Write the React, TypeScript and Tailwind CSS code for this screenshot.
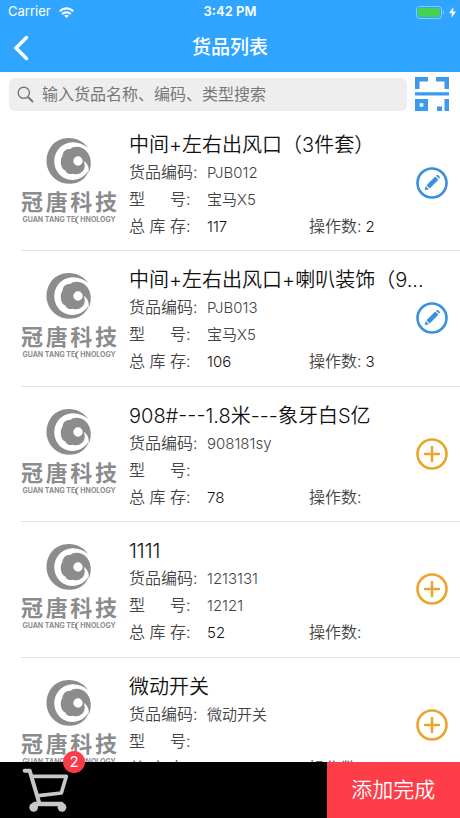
type Goods = {
  name: string;
  code: string;
  model?: string;
  stock: number;
  count?: number;
};

const goodsList: Goods[] = [
  { name: '中间+左右出风口（3件套）', code: 'PJB012', model: '宝马X5', stock: 117, count: 2 },
  { name: '中间+左右出风口+喇叭装饰（9...', code: 'PJB013', model: '宝马X5', stock: 106, count: 3 },
  { name: '908#---1.8米---象牙白S亿', code: '908181sy', stock: 78 },
  { name: '1111', code: '1213131', model: '12121', stock: 52 },
  { name: '微动开关', code: '微动开关', stock: 36 },
];

function StatusBar() {
  return (
    <div className="grid grid-cols-3 items-center h-6 px-2 text-[13px]">
      <div className="flex items-center gap-2">
        <span>Carrier</span>
        <svg width="15" height="11" viewBox="0 0 15 11" fill="none" stroke="white" strokeWidth="2.2">
          <path d="M.8 4.200C4.600.5 10.400.5 14.200 4.200" />
          <path d="M3.200 7c2.500-2.300 6.100-2.300 8.600 0" />
          <path d="M7.500 11 5.200 8.700c1.300-1.200 3.300-1.200 4.600 0z" fill="white" stroke="none" />
        </svg>
      </div>
      <span className="text-center font-semibold">3:42 PM</span>
      <div className="flex items-center justify-end">
        <svg width="29" height="13" viewBox="0 0 29 13">
          <rect x=".5" y=".5" width="25" height="12" rx="3" fill="none" stroke="#8ccbfc" />
          <rect x="2" y="2" width="22" height="9" rx="1.500" fill="#43d251" />
          <path d="M27 4.500c1.500.5 1.500 3.500 0 4z" fill="#8ccbfc" />
        </svg>
        <svg width="7" height="11" viewBox="0 0 7 11" className="ml-1 -mr-1">
          <path d="M4.500 0 0 6.200h3L2.200 11 7 4.600H4z" fill="white" />
        </svg>
      </div>
    </div>
  );
}

function Header() {
  return (
    <header className="shrink-0 bg-[#30a5ff] text-white">
      <StatusBar />
      <div className="grid grid-cols-[48px_1fr_48px] items-center h-12">
        <button type="button" aria-label="返回" className="flex items-center h-full pl-3">
          <svg width="18" height="26" viewBox="0 0 18 26" fill="none" stroke="white" strokeWidth="3.500">
            <path d="M14.500 2.500 4 13l10.500 10.500" strokeLinecap="round" strokeLinejoin="miter" />
          </svg>
        </button>
        <h1 className="text-center text-[19px] font-medium">货品列表</h1>
      </div>
    </header>
  );
}

function SearchBar() {
  return (
    <div className="flex shrink-0 items-center gap-2 h-11 pl-[9px] pr-[11px]">
      <label className="flex flex-1 items-center gap-2 h-[33px] px-2 rounded-md bg-[#eee]">
        <svg width="17" height="17" viewBox="0 0 17 17" fill="none" stroke="#76767a" strokeWidth="1.400">
          <circle cx="6.800" cy="6.800" r="5.600" />
          <path d="m11 11 5 5" strokeWidth="2" />
        </svg>
        <input
          type="search"
          aria-label="搜索货品"
          placeholder="输入货品名称、编码、类型搜索"
          className="flex-1 min-w-0 text-base outline-none placeholder:text-[#77777b]"
        />
      </label>
      <button type="button" aria-label="扫码">
        <svg width="34" height="34" viewBox="0 0 34 34" fill="#3b99f0">
          <path d="M0 0h13v4.500H4.500V12H0zM21 0h13v12h-4.500V4.500H21zM0 15.200h34v3.300H0z" />
          <path fillRule="evenodd" d="M0 22h13v12H0zM4.700 26.200v3.600h3.600v-3.600z" />
          <path d="M29.500 22H34v12h-4.500zM22 29.500h5V34h-5z" />
        </svg>
      </button>
    </div>
  );
}

function Logo() {
  return (
    <div className="flex flex-col items-center w-24 text-[#8c8c8c]">
      <svg width="46" height="46" viewBox="0 0 138 138" fill="currentColor">
        <path d="M126 30C103-5 48-12 17 23-12 60 0 117 48 134c36 11 71-5 81-38-19 32-57 39-84 18C18 91 18 48 46 25c24-19 57-15 80 5z" />
        <path
          fillRule="evenodd"
          d="M50 52C51 38 62 31 73 33C83 22 108 24 120 38C137 55 138 82 128 105C131 88 124 76 113 68C119 82 116 97 107 102C100 109 90 110 82 107C72 110 61 107 59 98C43 93 40 66 50 52zM96 55a14 14 0 1 0 0 28 14 14 0 0 0 0-28z"
        />
      </svg>
      <div className="flex justify-between self-stretch h-8 text-[22px] leading-9 font-bold">
        <span>冠</span>
        <span>唐</span>
        <span>科</span>
        <span>技</span>
      </div>
      <div className="flex items-center h-2 text-[7px] leading-2 font-bold whitespace-nowrap">
        <span>GUAN TANG TE</span>
        <svg width="5" height="10" viewBox="0 0 6 10" fill="currentColor">
          <path d="M6 0C-2 0-2 9 5 10 1 7 1 2 6 0z" />
        </svg>
        <span>HNOLOGY</span>
      </div>
    </div>
  );
}

function EditIcon() {
  return (
    <svg width="32" height="32" viewBox="0 0 32 32" fill="#3b90dd">
      <circle cx="16" cy="16" r="14.500" fill="none" stroke="#3b90dd" strokeWidth="2.600" />
      <path d="m8.700 23.300 1-4.200 3.200 3.200zM10.500 18.300l8.700-8.700 3.200 3.200-8.700 8.700zM20 8.800l1-.8c1-.7 3.500 1.800 2.800 2.800l-.8 1z" />
    </svg>
  );
}

function AddIcon() {
  return (
    <svg width="32" height="32" viewBox="0 0 32 32" fill="none" stroke="#eba52f" strokeWidth="2.600">
      <circle cx="16" cy="16" r="14.500" />
      <path d="M16 9v14M9 16h14" strokeLinecap="round" />
    </svg>
  );
}

function GoodsRow({ goods }: { goods: Goods }) {
  const added = goods.count !== undefined;

  return (
    <li className="flex odd:h-[135px] even:h-[136px] ml-[21px] border-b border-[#e2e2e2]">
      <div className="pt-[22px]">
        <Logo />
      </div>
      <div className="relative flex-1 min-w-0 pl-3 pt-[15px]">
        <h2 className="text-xl leading-7 font-[350] text-[#111] truncate pr-6">{goods.name}</h2>
        <dl className="grid grid-cols-[78px_102px_1fr] auto-rows-[27px] items-baseline leading-[27px] font-[350] text-[#444] whitespace-pre">
          <dt>货品编码:</dt>
          <dd className="col-span-2 text-[15px]">{goods.code}</dd>
          <dt>型{'\u3000  '}号:</dt>
          <dd className="col-span-2 text-[15px]">{goods.model}</dd>
          <dt>总 库 存:</dt>
          <dd className="text-[15px] text-[#111]">{goods.stock}</dd>
          <div className="flex items-baseline gap-1">
            <dt>操作数:</dt>
            <dd className="text-[15px] text-[#111]">{goods.count}</dd>
          </div>
        </dl>
        <button
          type="button"
          aria-label={added ? '编辑' : '添加'}
          className="absolute right-3 top-[51px]"
        >
          {added ? <EditIcon /> : <AddIcon />}
        </button>
      </div>
    </li>
  );
}

function Footer() {
  return (
    <footer className="flex shrink-0 justify-between h-14 bg-black">
      <button type="button" aria-label="购物车" className="relative w-24 pl-[22px]">
        <svg width="48" height="46" viewBox="0 0 144 138" fill="none" stroke="#c8c8c8" strokeLinecap="round" strokeLinejoin="round">
          <path d="M8 11h15l29 98" strokeWidth="12" />
          <path d="M34 28h99l-15 50-68 8" strokeWidth="11" />
          <path d="M38 111h80" strokeWidth="14" />
          <circle cx="35" cy="121" r="13" fill="#c8c8c8" stroke="none" />
          <circle cx="120" cy="121" r="13" fill="#c8c8c8" stroke="none" />
        </svg>
        <span className="absolute -top-[11px] left-[63px] size-[22px] rounded-full bg-[#fb3b47] text-[15px] leading-[22px] text-center text-white">
          2
        </span>
      </button>
      <button type="button" className="w-[29%] bg-[#fd3e48] text-[21px] font-[350] text-white">
        添加完成
      </button>
    </footer>
  );
}

export default function App() {
  return (
    <div className="flex flex-col h-screen bg-white font-[Inter,'Noto_Sans_CJK_SC',sans-serif]">
      <Header />
      <SearchBar />
      <main className="flex-1 min-h-0 overflow-hidden">
        <ul>
          {goodsList.map((goods) => (
            <GoodsRow key={goods.name} goods={goods} />
          ))}
        </ul>
      </main>
      <Footer />
    </div>
  );
}
